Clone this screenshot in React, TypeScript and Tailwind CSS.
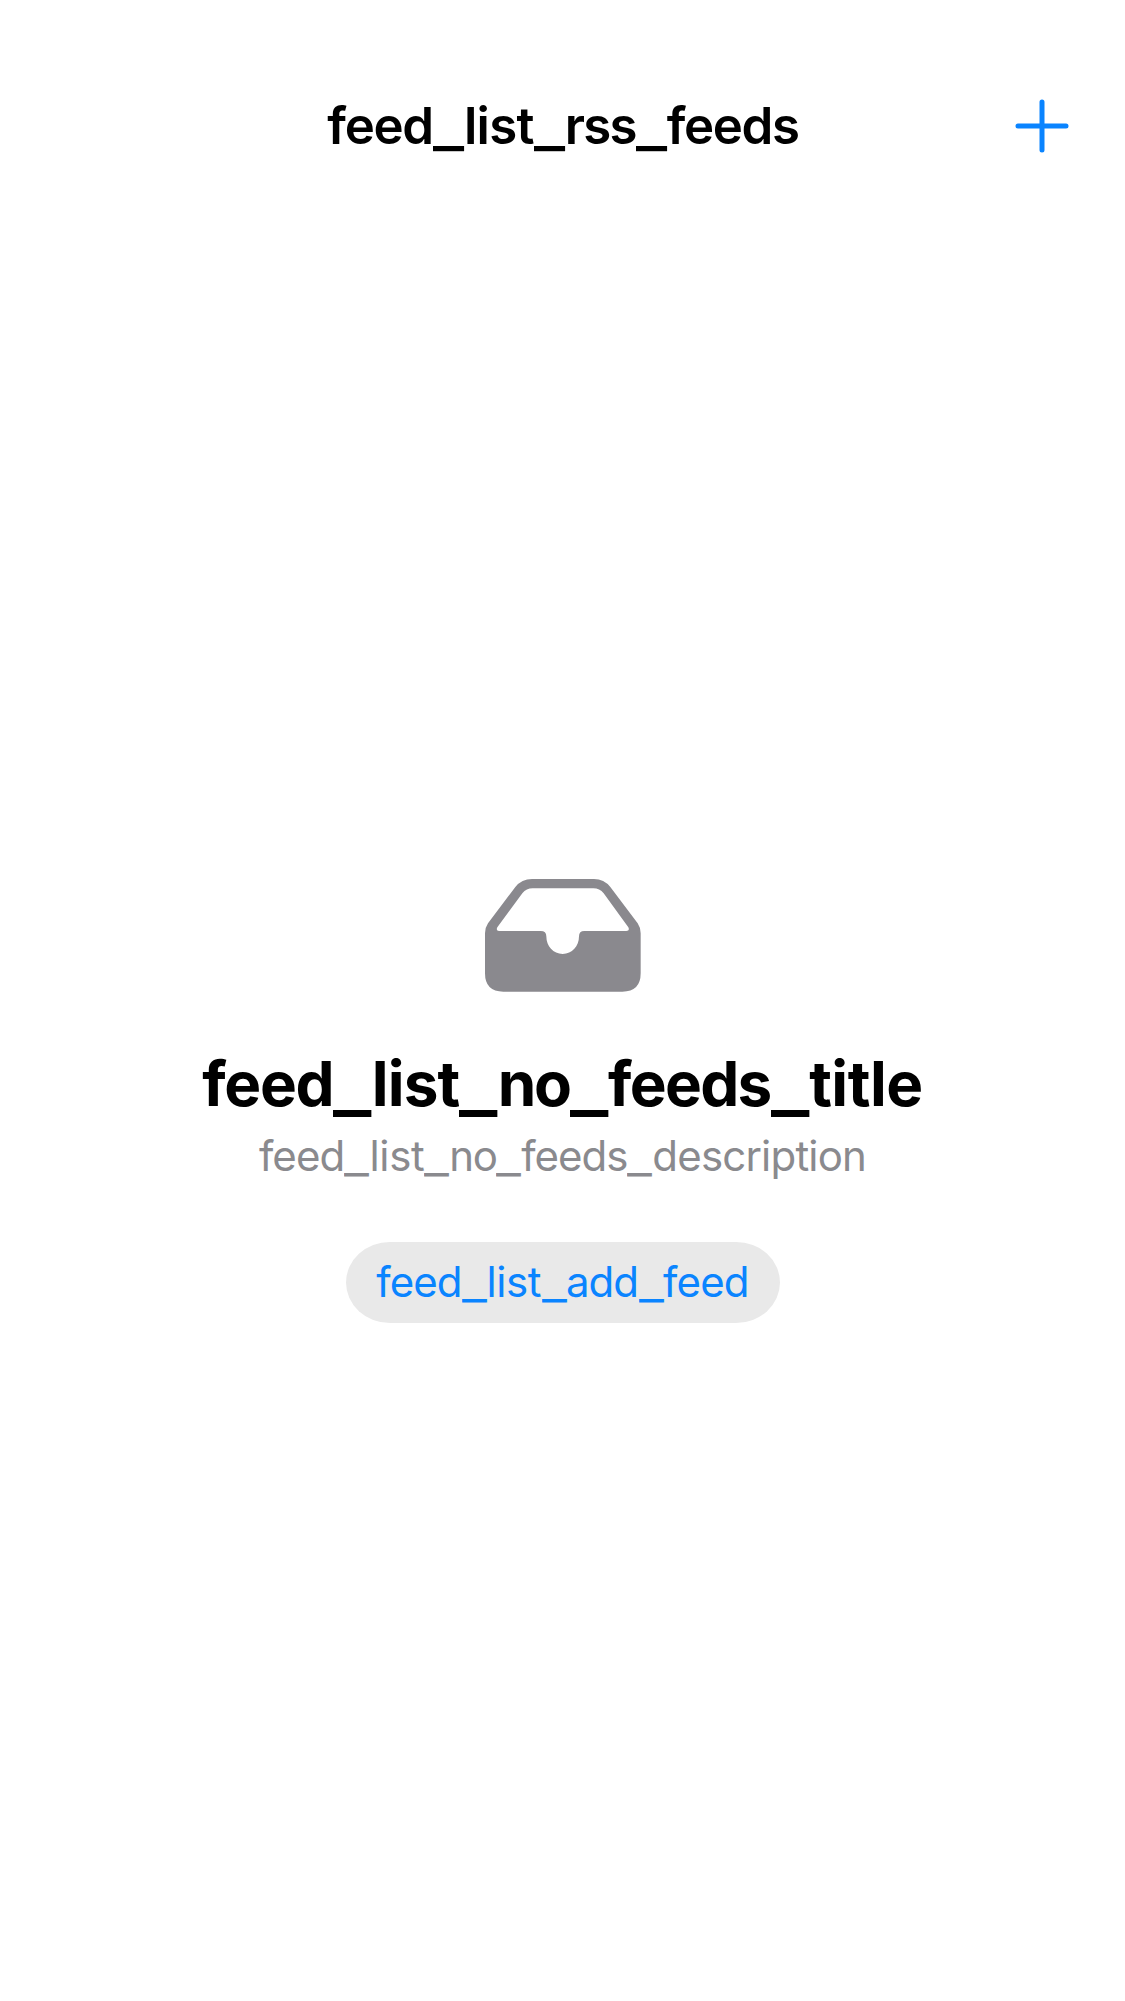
import { Fragment } from 'react';

type Word = [text: string, tracking: string];

// Words joined by underscores, each underscore stretched to fill a wider box.
function Key({ words, bar }: { words: Word[]; bar: string }) {
  return (
    <>
      {words.map(([text, tracking], i) => (
        <Fragment key={i}>
          {i > 0 && (
            <span className={`inline-block tracking-normal ${bar}`}>
              <span className="inline-block origin-left scale-x-[1.3]">_</span>
            </span>
          )}
          <span className={tracking}>{text}</span>
        </Fragment>
      ))}
    </>
  );
}

const heading: Word[] = [
  ['feed', 'tracking-[-1.3px]'],
  ['list', 'tracking-[-0.7px]'],
  ['rss', 'tracking-[-1.75px]'],
  ['feeds', 'tracking-[-1.4px]'],
];

const title: Word[] = [
  ['feed', 'tracking-[-1.3px]'],
  ['list', 'tracking-[-0.9px]'],
  ['no', 'tracking-[-2.4px]'],
  ['feeds', 'tracking-[-1.7px]'],
  ['title', 'tracking-[-0.5px]'],
];

const description: Word[] = [
  ['feed', 'tracking-[-0.85px]'],
  ['list', 'tracking-[-0.35px]'],
  ['no', 'tracking-[-1.5px]'],
  ['feeds', 'tracking-[-1.05px]'],
  ['description', 'tracking-[-0.8px]'],
];

const action: Word[] = [
  ['feed', 'tracking-[-0.95px]'],
  ['list', 'tracking-[-0.45px]'],
  ['add', 'tracking-[-1px]'],
  ['feed', 'tracking-[-0.85px]'],
];

export default function App() {
  return (
    <div className="flex h-[2001px] w-[1125px] flex-col bg-white font-['Inter',sans-serif] text-black">
      <header className="grid h-[192px] grid-cols-[1fr_auto_1fr] items-center pt-[60px]">
        <span />
        <h1 className="whitespace-nowrap pl-[1px] text-[51px] font-semibold leading-[62px]">
          <Key words={heading} bar="w-[31px] translate-y-[2px]" />
        </h1>
        <button className="mr-[56px] justify-self-end" aria-label="Add feed">
          <svg width="54" height="54" viewBox="0 0 54 54" stroke="#0a84ff" strokeWidth="5" strokeLinecap="round">
            <path d="M27 3v48M3 27h48" />
          </svg>
        </button>
      </header>
      <main className="flex flex-col items-center pt-[687px]">
        <svg width="157" height="113" viewBox="42 42 471 339" fill="#8a898e">
          <path
            fillRule="evenodd"
            d="M186 42H372Q402 42 421 66L503 175Q512 188 512 205V325Q512 380 457 380H100Q45 380 45 325V205Q45 188 54 175L136 66Q155 42 186 42ZM188 70Q169 70 157 85L82 187Q77 198 87 198H212Q229 198 229 214C229 244 250 267 278 267C306 267 327 244 327 214Q327 198 343 198H469Q480 198 475 187L401 85Q389 70 370 70Z"
          />
        </svg>
        <h2 className="mt-[52px] whitespace-nowrap text-[62px] font-bold leading-[80px]">
          <Key words={title} bar="w-[38.5px] translate-y-[4px]" />
        </h2>
        <p className="mt-[6px] whitespace-nowrap text-[42px] leading-[52px] text-[#8a8a8e]">
          <Key words={description} bar="w-[25px] translate-y-[2px]" />
        </p>
        <button className="mt-[60px] flex h-[81px] w-[434px] items-center justify-center whitespace-nowrap rounded-[44px/40.5px] bg-[#e9e9e9] pb-[2px] text-[42px] leading-[52px] text-[#0a84ff]">
          <span>
            <Key words={action} bar="w-[25px] -translate-x-[2px] translate-y-[2px]" />
          </span>
        </button>
      </main>
    </div>
  );
}
